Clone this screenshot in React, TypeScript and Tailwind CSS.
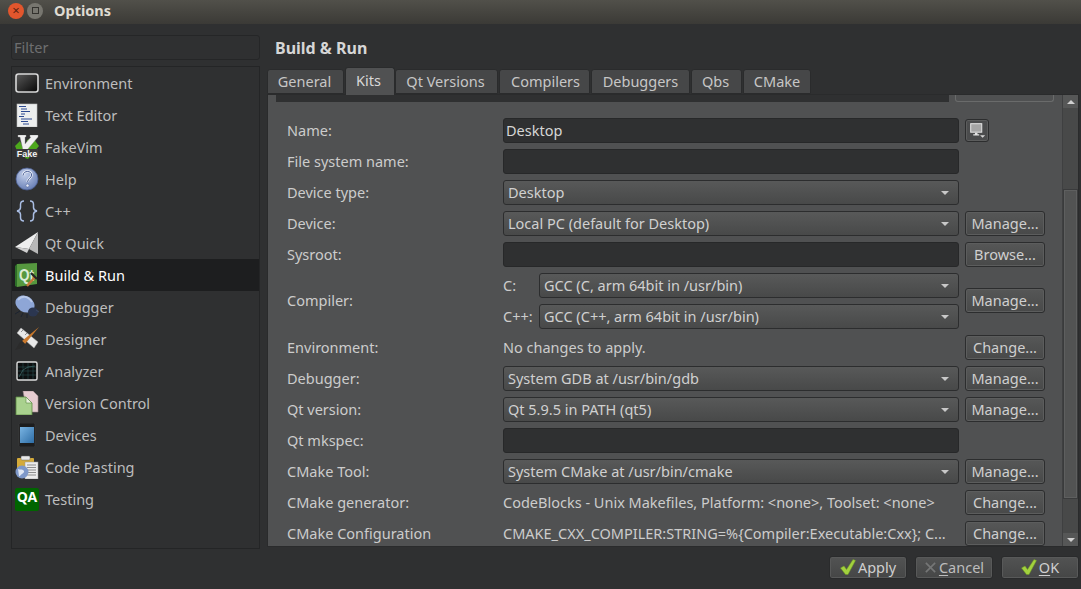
import type { ReactNode } from "react"

const font = { fontFamily: '"Noto Sans", "Open Sans", sans-serif' }

function EnvironmentIcon() {
  return (
    <svg viewBox="0 0 24 24" className="h-6 w-6">
      <defs>
        <linearGradient id="env" x1="0" y1="0" x2="1" y2="1">
          <stop offset="0" stopColor="#5a5a5a" />
          <stop offset="1" stopColor="#050505" />
        </linearGradient>
      </defs>
      <rect x="1" y="3" width="22" height="18" rx="2.5" fill="url(#env)" stroke="#d8d8d8" strokeWidth="1.6" />
    </svg>
  )
}

function TextEditorIcon() {
  return (
    <svg viewBox="0 0 24 24" className="h-6 w-6">
      <rect x="2" y="1" width="20" height="23" fill="#eceeee" stroke="#bbb" strokeWidth="0.6" />
      <path d="M4 3.500h7M6 6h6M6 8.500h9M6 11h4M4 13.500h5M6 16h11M6 18.500h7M8 21h6" stroke="#2c4a92" strokeWidth="1" fill="none" />
    </svg>
  )
}

function FakeVimIcon() {
  return (
    <svg viewBox="0 0 24 24" className="h-6 w-6">
      <path d="M12 5 L18 3 L24 11 L13 24 L10 23 Z" fill="#4da81c" />
      <path d="M0 11 L5 6 L10 18 L3 18 Z" fill="#4da81c" />
      <path d="M3 0 H11 V2 H10 V9 L16 2 H15 V0 H23 V2 L12 15 H8 L5 2 H3 Z" fill="#f0f0f0" stroke="#9a9a9a" strokeWidth="0.400" />
      <rect x="1" y="14" width="22" height="8" fill="#3a3a3a" />
      <text x="12" y="21.500" textAnchor="middle" fontSize="9" fontWeight="700" fill="#f4f4f4" fontFamily="Liberation Sans, sans-serif">Fake</text>
    </svg>
  )
}

function HelpIcon() {
  return (
    <svg viewBox="0 0 24 24" className="h-6 w-6">
      <defs>
        <radialGradient id="help" cx="0.4" cy="0.3" r="0.8">
          <stop offset="0" stopColor="#c3cfea" />
          <stop offset="1" stopColor="#5e76b0" />
        </radialGradient>
      </defs>
      <circle cx="12" cy="12" r="11" fill="url(#help)" stroke="#475b8d" strokeWidth="0.800" />
      <path d="M8 8.500c.4-3 2.400-4 4.400-4 2.600 0 4.200 1.500 4.200 3.500 0 3-3.800 3.400-4 7" fill="none" stroke="#e6ebf6" strokeWidth="2.400" />
      <path d="M8 8.500c.4-3 2.400-4 4.400-4 2.600 0 4.200 1.500 4.200 3.500 0 3-3.800 3.400-4 7" fill="none" stroke="#4a5f96" strokeWidth="1" />
      <circle cx="12.500" cy="18.500" r="1.600" fill="#e6ebf6" stroke="#4a5f96" strokeWidth="0.500" />
    </svg>
  )
}

function CppIcon() {
  return (
    <svg viewBox="0 0 24 24" className="h-6 w-6">
      <path
        d="M9 2c-3 0-3.500 1.500-3.500 3.500v3c0 2-1 3-3.500 3.500 2.500.5 3.500 1.500 3.500 3.500v3c0 2 .5 3.500 3.500 3.500M15 2c3 0 3.500 1.500 3.500 3.500v3c0 2 1 3 3.500 3.500-2.500.5-3.500 1.500-3.500 3.500v3c0 2-.5 3.500-3.500 3.500"
        fill="none"
        stroke="#a9bde3"
        strokeWidth="1.500"
      />
    </svg>
  )
}

function QtQuickIcon() {
  return (
    <svg viewBox="0 0 24 24" className="h-6 w-6">
      <path d="M0 16 L23 1 L14 18 Z" fill="#eeeeee" />
      <path d="M23 1 L14 18 L23 23 Z" fill="#b8b8b8" />
      <path d="M0 16 L14 18 L12 22 Z" fill="#cfcfcf" />
    </svg>
  )
}

function BuildRunIcon() {
  return (
    <svg viewBox="0 0 24 24" className="h-6 w-6">
      <path d="M2 1 L22 0 V21 L2 24 Z" fill="#56983f" />
      <path d="M0 3 L2 1 V24 L0 23 Z" fill="#2d6e28" />
      <text x="4" y="18" fontSize="17" fontWeight="700" fill="#dcebd6" textLength="15" lengthAdjust="spacingAndGlyphs" fontFamily="Liberation Sans, sans-serif">Qt</text>
      <path d="M12 23 L20 14" stroke="#c5763b" strokeWidth="2.400" />
      <path d="M16 10 L22 16" stroke="#262626" strokeWidth="2.200" />
    </svg>
  )
}

function DebuggerIcon() {
  return (
    <svg viewBox="0 0 24 24" className="h-6 w-6">
      <path d="M0 19 L5 16M6 22 L8 18M12 23 L12 19M1 8 L5 10" stroke="#1c2330" strokeWidth="1" />
      <ellipse cx="10" cy="9" rx="10" ry="8" transform="rotate(30 10 9)" fill="#8ea6d6" />
      <path d="M3 5 C7 0 13 1 17 7" stroke="#b8c8e8" strokeWidth="2" fill="none" />
      <ellipse cx="18" cy="17" rx="5" ry="4.500" fill="#2b3650" />
      <path d="M21 15 L24 17" stroke="#3a4660" strokeWidth="1.200" />
    </svg>
  )
}

function DesignerIcon() {
  return (
    <svg viewBox="0 0 24 24" className="h-6 w-6">
      <path d="M2 6 L6 1 L23 15 L19 21 Z" fill="#e8e8e8" stroke="#aaa" strokeWidth="0.500" />
      <path d="M6 5 L8 3M10 8 L12 6M13 11 L15 9" stroke="#777" strokeWidth="0.800" />
      <path d="M24 0 L7 14 L10 17 Z" fill="#c9782c" />
      <path d="M7 14 L10 17 C8 21 5 22 0 23 C3 20 3 16 7 14 Z" fill="#2b2b2b" />
    </svg>
  )
}

function AnalyzerIcon() {
  return (
    <svg viewBox="0 0 24 24" className="h-6 w-6">
      <rect x="2" y="3" width="20" height="18" rx="1.500" fill="#0d0f10" stroke="#dddddd" strokeWidth="1.400" />
      <path d="M3 8h18M3 12h18M3 16h18M8 4v16M13 4v16M18 4v16" stroke="#2f5a5a" strokeWidth="0.500" />
      <path d="M4 18 L8 11 L13 8 L20 7" stroke="#416c6c" strokeWidth="0.700" fill="none" />
    </svg>
  )
}

function VersionControlIcon() {
  return (
    <svg viewBox="0 0 24 24" className="h-6 w-6">
      <path d="M8 0 H18 L23 5 V21 H12 Z" fill="#e6ccd0" stroke="#9d8a8d" strokeWidth="0.600" />
      <path d="M1 6 H11 L17 12 V24 H1 Z" fill="#a9d18e" stroke="#5c8a43" strokeWidth="0.800" />
      <path d="M11 6 V12 H17 Z" fill="#e6f1da" stroke="#5c8a43" strokeWidth="0.600" />
    </svg>
  )
}

function DevicesIcon() {
  return (
    <svg viewBox="0 0 24 24" className="h-6 w-6">
      <rect x="4" y="0" width="16" height="24" rx="1.500" fill="#1c1d1e" stroke="#444" strokeWidth="0.500" />
      <defs>
        <linearGradient id="dev" x1="0" y1="0" x2="1" y2="1">
          <stop offset="0" stopColor="#79b4e3" />
          <stop offset="1" stopColor="#2e6da5" />
        </linearGradient>
      </defs>
      <rect x="5" y="4" width="14" height="16" fill="url(#dev)" />
    </svg>
  )
}

function CodePastingIcon() {
  return (
    <svg viewBox="0 0 24 24" className="h-6 w-6">
      <rect x="2" y="3" width="17" height="14" rx="1" fill="#d4aa3a" />
      <rect x="6" y="1" width="9" height="4" rx="1" fill="#e8e8e8" stroke="#666" strokeWidth="0.500" />
      <rect x="10" y="7" width="13" height="17" fill="#ececec" stroke="#999" strokeWidth="0.500" />
      <path d="M12 10h9M12 12.500h9M12 15h9M12 17.500h9M12 20h9" stroke="#777" strokeWidth="0.800" />
      <circle cx="7" cy="17" r="6.500" fill="#7e98c9" />
      <path d="M3 14c2 1 3 0 5 1s1 3-1 4-2 3-3 2" fill="#dfe6f3" />
    </svg>
  )
}

function TestingIcon() {
  return (
    <div className="flex h-[23px] w-[24px] items-center justify-center rounded-[2px] bg-[#006400] pb-[4px] text-[14px] font-bold leading-none text-white">
      QA
    </div>
  )
}

function MonitorIcon() {
  return (
    <svg viewBox="0 0 20 20" className="h-[17px] w-[17px]">
      <rect x="2" y="2" width="13" height="10" fill="#a5a5a5" stroke="#e4e4e4" strokeWidth="1.200" />
      <path d="M7 12.500h3v2h2v1.500H5V14.500h2z" fill="#e4e4e4" />
      <path d="M13 15.500h6l-3 3z" fill="#d6d6d6" />
    </svg>
  )
}

const navItems: { label: string; icon: ReactNode; active?: boolean }[] = [
  { label: "Environment", icon: <EnvironmentIcon /> },
  { label: "Text Editor", icon: <TextEditorIcon /> },
  { label: "FakeVim", icon: <FakeVimIcon /> },
  { label: "Help", icon: <HelpIcon /> },
  { label: "C++", icon: <CppIcon /> },
  { label: "Qt Quick", icon: <QtQuickIcon /> },
  { label: "Build & Run", icon: <BuildRunIcon />, active: true },
  { label: "Debugger", icon: <DebuggerIcon /> },
  { label: "Designer", icon: <DesignerIcon /> },
  { label: "Analyzer", icon: <AnalyzerIcon /> },
  { label: "Version Control", icon: <VersionControlIcon /> },
  { label: "Devices", icon: <DevicesIcon /> },
  { label: "Code Pasting", icon: <CodePastingIcon /> },
  { label: "Testing", icon: <TestingIcon /> },
]

const tabs = [
  { label: "General", width: "w-[77px] pr-[2px]" },
  { label: "Kits", width: "w-[50px] pr-[3px]", active: true },
  { label: "Qt Versions", width: "w-[103px] pr-[2px]" },
  { label: "Compilers", width: "w-[91px] pl-[2px]" },
  { label: "Debuggers", width: "w-[99px]" },
  { label: "Qbs", width: "w-[51px] pr-[2px]" },
  { label: "CMake", width: "w-[68px]" },
]

function Input({ value = "" }: { value?: string }) {
  return (
    <div className="flex h-[25px] w-full items-center rounded-[3px] border border-[#272829] bg-[#2f3031] pl-[2px] text-[#d6d6d6]">
      {value}
    </div>
  )
}

function Combo({ value }: { value: string }) {
  return (
    <div className="flex h-[25px] w-full items-center justify-between rounded-[3px] border border-[#2c2d2e] bg-gradient-to-b from-[#585959] to-[#484949] pl-[4px] pr-[9px] text-[#d0d0d0]">
      <span>{value}</span>
      <span className="h-0 w-0 border-x-[4px] border-t-[4px] border-x-transparent border-t-[#c8c8c8]" />
    </div>
  )
}

function Btn({ label }: { label: string }) {
  return (
    <div className="flex h-[25px] w-[80px] items-center justify-center rounded-[3px] border border-[#2c2d2e] bg-gradient-to-b from-[#565757] to-[#484949] text-[#cfcfcf] shadow-[inset_0_0_0_1px_#5c5d5d]">
      {label}
    </div>
  )
}

function Row({ label, children, button, lift }: { label: string; children: ReactNode; button?: ReactNode; lift?: boolean }) {
  const side = lift ? "pb-[2px]" : ""
  return (
    <div className="flex items-center">
      <div className={`w-[216px] shrink-0 text-[#cccccc] ${side}`}>{label}</div>
      <div className="w-[456px] shrink-0">{children}</div>
      <div className={`ml-[6px] w-[80px] shrink-0 ${side}`}>{button}</div>
    </div>
  )
}

function Check({ disabled }: { disabled?: boolean }) {
  if (disabled) {
    return (
      <svg viewBox="0 0 14 14" className="h-[13px] w-[13px]">
        <path d="M2 2 L12 12 M12 2 L2 12" stroke="#757676" strokeWidth="1.800" />
      </svg>
    )
  }
  return (
    <svg viewBox="0 0 16 16" className="h-[16px] w-[16px]">
      <path d="M0.500 9 L4 7 L6.500 10.500 L13 0.500 L15.500 1.500 L8 15.500 L5.500 15.500 Z" fill="#a2d13e" stroke="#6f9a22" strokeWidth="0.500" />
    </svg>
  )
}

function FooterBtn({ children }: { children: ReactNode }) {
  return (
    <div className="flex h-[23px] w-[78px] items-center justify-center gap-[2px] rounded-[3px] border border-[#2a2b2c] bg-gradient-to-b from-[#525353] to-[#454646] pb-px text-[#cfcfcf] shadow-[inset_0_0_0_1px_#585959]">
      {children}
    </div>
  )
}

export default function App() {
  return (
    <div style={font} className="flex h-[589px] w-[1081px] flex-col overflow-hidden bg-[#2f3031] text-[14.500px] leading-none">
      <div className="flex h-6 shrink-0 items-center bg-gradient-to-b from-[#51504a] to-[#3b3a36] pb-[3px] pl-2">
        <div className="flex h-4 w-4 items-center justify-center rounded-full bg-[#e2562d] text-[13px] text-[#5a2210]">×</div>
        <div className="ml-[3px] flex h-4 w-4 items-center justify-center rounded-full bg-[#77766f]">
          <div className="h-[7px] w-[7px] border border-[#33322e]" />
        </div>
        <div className="ml-[11px] text-[14.500px] font-bold text-[#dfdbd2]">Options</div>
      </div>

      <div className="flex min-h-0 flex-1 pl-[11px]">
        <div className="flex w-[249px] shrink-0 flex-col pt-[11px]">
          <div className="flex h-[25px] items-center rounded-[3px] border border-[#252627] pl-[2px] text-[#6d6e6f]">Filter</div>
          <div className="mt-[6px] h-[483px] border border-[#242526]">
            {navItems.map((item) => (
              <div
                key={item.label}
                className={`flex h-8 items-center gap-[6px] pl-[3px] ${item.active ? "bg-[#1d1e1f] text-white" : "text-[#bdbdbd]"}`}
              >
                <span className="flex h-6 w-6 items-center justify-center">{item.icon}</span>
                {item.label}
              </div>
            ))}
          </div>
        </div>

        <div className="ml-[7px] flex w-[812px] shrink-0 flex-col">
          <div className="flex h-[44px] shrink-0 items-start pl-[8px] pt-[16px] text-[16px] font-bold text-[#d6d6d6]">Build &amp; Run</div>

          <div className="flex h-[26px] shrink-0 items-end">
            {tabs.map((tab) => (
              <div
                key={tab.label}
                className={`flex shrink-0 items-center justify-center rounded-t-[3px] border border-[#2a2b2c] ${tab.width} ${
                  tab.active
                    ? "relative z-10 -mb-px h-[28px] border-b-0 bg-[#505152] pb-[2px] text-[#d8d8d8]"
                    : "mr-px h-[25px] bg-[#464748] text-[#c6c6c6]"
                }`}
              >
                {tab.label}
              </div>
            ))}
          </div>

          <div className="flex h-[453px] shrink-0 overflow-hidden border border-[#2a2b2c] bg-[#505152]">
            <div className="flex min-w-0 flex-1 flex-col overflow-hidden pl-[8px]">
              <div className="flex h-[7px] shrink-0 items-start">
                <div className="h-[7px] w-[673px] bg-[#2f3031]" />
                <div className="ml-[6px] h-[7px] w-[99px] rounded-b-[3px] border border-t-0 border-[#6a6b6b]" />
              </div>
              <div className="flex flex-col gap-[6px] pl-[11px] pt-[16px]">
                <Row
                  label="Name:"
                  button={
                    <div className="flex h-[23px] w-[24px] items-center justify-center rounded-[3px] border border-[#2c2d2e] bg-[#4b4c4d] shadow-[inset_0_0_0_1px_#5c5d5d]">
                      <MonitorIcon />
                    </div>
                  }
                >
                  <Input value="Desktop" />
                </Row>
                <Row label="File system name:">
                  <Input />
                </Row>
                <Row label="Device type:">
                  <Combo value="Desktop" />
                </Row>
                <Row label="Device:" button={<Btn label="Manage..." />}>
                  <Combo value="Local PC (default for Desktop)" />
                </Row>
                <Row label="Sysroot:" button={<Btn label="Browse..." />}>
                  <Input />
                </Row>
                <Row label="Compiler:" button={<Btn label="Manage..." />} lift>
                  <div className="flex flex-col gap-[6px]">
                    <div className="flex items-center">
                      <span className="w-[36px] shrink-0 text-[#cccccc]">C:</span>
                      <Combo value="GCC (C, arm 64bit in /usr/bin)" />
                    </div>
                    <div className="flex items-center">
                      <span className="w-[36px] shrink-0 text-[#cccccc]">C++:</span>
                      <Combo value="GCC (C++, arm 64bit in /usr/bin)" />
                    </div>
                  </div>
                </Row>
                <Row label="Environment:" button={<Btn label="Change..." />}>
                  <span className="text-[#cccccc]">No changes to apply.</span>
                </Row>
                <Row label="Debugger:" button={<Btn label="Manage..." />}>
                  <Combo value="System GDB at /usr/bin/gdb" />
                </Row>
                <Row label="Qt version:" button={<Btn label="Manage..." />}>
                  <Combo value="Qt 5.9.5 in PATH (qt5)" />
                </Row>
                <Row label="Qt mkspec:">
                  <Input />
                </Row>
                <Row label="CMake Tool:" button={<Btn label="Manage..." />}>
                  <Combo value="System CMake at /usr/bin/cmake" />
                </Row>
                <Row label="CMake generator:" button={<Btn label="Change..." />}>
                  <span className="text-[#cccccc]">CodeBlocks - Unix Makefiles, Platform: &lt;none&gt;, Toolset: &lt;none&gt;</span>
                </Row>
                <Row label="CMake Configuration" button={<Btn label="Change..." />}>
                  <span className="whitespace-nowrap text-[#cccccc]">CMAKE_CXX_COMPILER:STRING=%{"{"}Compiler:Executable:Cxx{"}"}; C...</span>
                </Row>
              </div>
            </div>

            <div className="flex w-[16px] shrink-0 flex-col border-l border-[#3f4041] bg-[#484949]">
              <div className="flex h-[13px] shrink-0 items-center justify-center bg-[#565757]">
                <span className="h-0 w-0 border-x-[4px] border-b-[4px] border-x-transparent border-b-[#d0d0d0]" />
              </div>
              <div className="h-[81px] shrink-0" />
              <div className="h-[310px] shrink-0 border border-[#3a3b3c] bg-[#525353] shadow-[inset_0_0_0_1px_#5e5f5f]" />
              <div className="flex-1" />
              <div className="flex h-[13px] shrink-0 items-center justify-center bg-[#565757]">
                <span className="h-0 w-0 border-x-[4px] border-t-[4px] border-x-transparent border-t-[#d0d0d0]" />
              </div>
            </div>
          </div>

          <div className="flex justify-end gap-[8px] pt-[9px]">
            <FooterBtn>
              <Check />
              <span>Apply</span>
            </FooterBtn>
            <FooterBtn>
              <Check disabled />
              <span className="text-[#bdbdbd]"><span className="underline underline-offset-2">C</span>ancel</span>
            </FooterBtn>
            <FooterBtn>
              <Check />
              <span><span className="underline underline-offset-2">O</span>K</span>
            </FooterBtn>
          </div>
        </div>
      </div>
    </div>
  )
}
